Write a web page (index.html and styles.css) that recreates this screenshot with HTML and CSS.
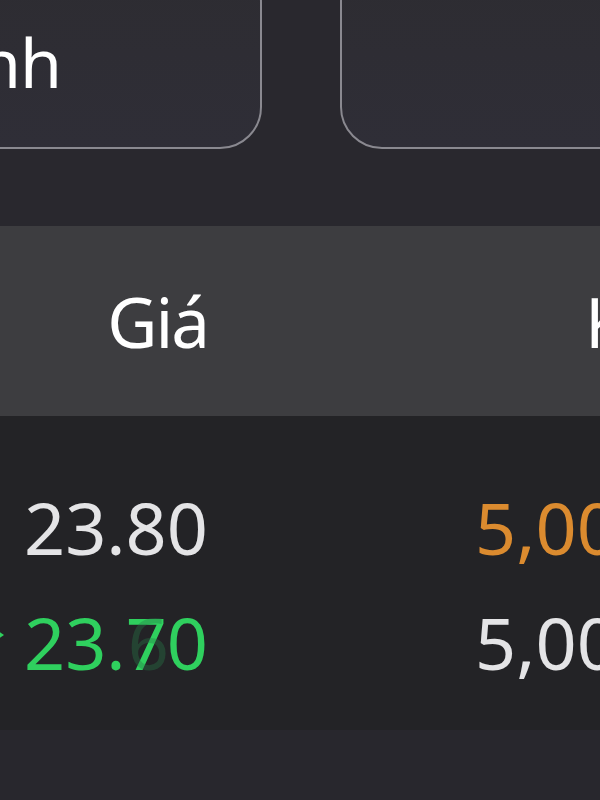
FILE: index.html
```html
<!DOCTYPE html>
<html lang="vi">
<head>
<meta charset="utf-8">
<link rel="stylesheet" href="styles.css">
</head>
<body>
<div class="screen">
  <div class="top">
    <div class="field field-left"><span class="field-text">nh</span></div>
    <div class="field field-right"></div>
  </div>
  <div class="head">
    <div class="c1">Giá</div>
    <div class="c2">K</div>
  </div>
  <div class="body">
    <div class="row">
      <div class="c1 price">23.80</div>
      <div class="c2 vol orange">5,00</div>
    </div>
    <div class="row">
      <div class="c1 price green"><span class="arrow"></span><span>23.</span><span class="digit">7<span class="ghost">6</span></span><span>0</span></div>
      <div class="c2 vol">5,00</div>
    </div>
  </div>
  <div class="foot"></div>
</div>
</body>
</html>
```
FILE: styles.css
```css
html, body {
  margin: 0;
  padding: 0;
  background: #29282e;
}
.screen {
  width: 600px;
  height: 800px;
  overflow: hidden;
  font-family: "Noto Sans", "Open Sans", sans-serif;
  display: flex;
  flex-direction: column;
}
.top {
  height: 226px;
  flex: none;
  background: #29282e;
  display: flex;
  gap: 78px;
  align-items: flex-start;
}
.field {
  flex: none;
  height: 189px;
  margin-top: -40px;
  border: 2px solid #8a8990;
  border-radius: 42px;
  background: linear-gradient(#2d2c31, #2f2e37);
  box-sizing: border-box;
  display: flex;
  align-items: center;
}
.field-left {
  width: 402px;
  margin-left: -140px;
  padding-left: 117px;
}
.field-right {
  width: 400px;
}
.field-text {
  color: #ffffff;
  font-size: 68px;
  line-height: 1;
  padding-top: 14px;
  letter-spacing: -1px;
}
.head {
  height: 190px;
  flex: none;
  background: #3d3d40;
  display: flex;
  align-items: center;
  color: #ffffff;
  font-size: 69px;
  letter-spacing: -2px;
}
.c1 {
  width: 208px;
  flex: none;
  text-align: right;
}
.head .c2 {
  padding-left: 377px;
  white-space: nowrap;
}
.body {
  height: 314px;
  flex: none;
  background: #232326;
  padding-top: 53px;
  box-sizing: border-box;
}
.row {
  height: 115px;
  display: flex;
  align-items: center;
  font-size: 72px;
  color: #e4e4e6;
  white-space: nowrap;
}
.row .c2 {
  padding-left: 267px;
}
.price {
  display: flex;
  align-items: center;
  justify-content: flex-end;
}
.green {
  color: #2fd05e;
}
.orange {
  color: #db8b2f;
}
.arrow {
  width: 0;
  height: 0;
  border-left: 9px solid #2fd05e;
  border-top: 6px solid transparent;
  border-bottom: 6px solid transparent;
  margin-right: 20px;
  margin-left: -10px;
  margin-top: -14px;
}
.digit {
  position: relative;
}
.ghost {
  position: absolute;
  left: 2px;
  top: 0;
  color: rgba(40, 120, 70, 0.38);
}
.foot {
  flex: 1;
  background: #28272d;
}
```
